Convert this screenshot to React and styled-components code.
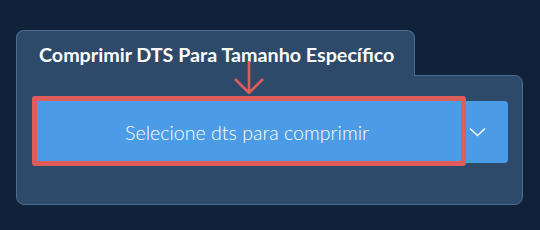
import React from 'react';
import styled, { createGlobalStyle } from 'styled-components';

const colors = {
  page: '#102239',
  panel: '#2d4a6a',
  border: '#4e6b8d',
  blue: '#4b9be6',
  red: '#de5d5a',
  white: '#ffffff'
};

const GlobalStyle = createGlobalStyle`
  html, body {
    margin: 0;
    padding: 0;
    background: ${colors.page};
    font-family: Lato, "Open Sans", sans-serif;
  }
`;

const Page = styled.div`
  width: 540px;
  height: 230px;
  padding: 30px 0 0 16px;
  box-sizing: border-box;
`;

const Card = styled.div`
  position: relative;
  width: 507px;
`;

const Tab = styled.div`
  position: relative;
  z-index: 1;
  width: 399px;
  height: 46px;
  box-sizing: border-box;
  margin-bottom: -1px;
  padding: 12px 0 0 22px;
  background: ${colors.panel};
  border: 1px solid ${colors.border};
  border-bottom: none;
  border-radius: 8px 8px 0 0;
  color: ${colors.white};
  font-size: 19.7px;
  font-weight: 700;
  line-height: 24px;
  white-space: nowrap;
`;

const Body = styled.div`
  height: 130px;
  box-sizing: border-box;
  padding: 25px 14px 0 15px;
  background: ${colors.panel};
  border: 1px solid ${colors.border};
  border-radius: 0 8px 8px 8px;
`;

const SplitButton = styled.div`
  position: relative;
  display: flex;
  height: 62px;
  background: ${colors.blue};
  border-radius: 4px;
`;

const MainButton = styled.div`
  display: flex;
  align-items: center;
  justify-content: center;
  width: 430px;
  padding-top: 1px;
  color: ${colors.white};
  font-size: 19.6px;
  font-weight: 300;
  -webkit-font-smoothing: antialiased;
`;

const Toggle = styled.div`
  display: flex;
  align-items: center;
  justify-content: flex-start;
  flex: 1;
  padding-left: 7px;
`;

const Highlight = styled.div`
  position: absolute;
  left: 0;
  top: -5px;
  width: 434px;
  height: 70px;
  box-sizing: border-box;
  border: 5px solid ${colors.red};
  border-radius: 3px;
  pointer-events: none;
`;

const Pointer = styled.svg`
  position: absolute;
  left: 214px;
  top: 30px;
  z-index: 2;
`;

const App = () => (
  <>
    <GlobalStyle />
    <Page>
      <Card>
        <Tab>Comprimir DTS Para Tamanho Específico</Tab>
        <Body>
          <SplitButton>
            <MainButton>Selecione dts para comprimir</MainButton>
            <Toggle>
              <svg width="17" height="10" viewBox="0 0 17 10">
                <path d="M1 1.5 L8.5 8.5 L16 1.5" fill="none" stroke="#fff" strokeWidth="1.4" />
              </svg>
            </Toggle>
            <Highlight />
          </SplitButton>
        </Body>
        <Pointer width="40" height="36" viewBox="0 0 40 36">
          <path
            d="M19 1 V33 M5 19 L19 33 L33 19"
            fill="none"
            stroke={colors.red}
            strokeWidth="2.6"
          />
        </Pointer>
      </Card>
    </Page>
  </>
);

export default App;
